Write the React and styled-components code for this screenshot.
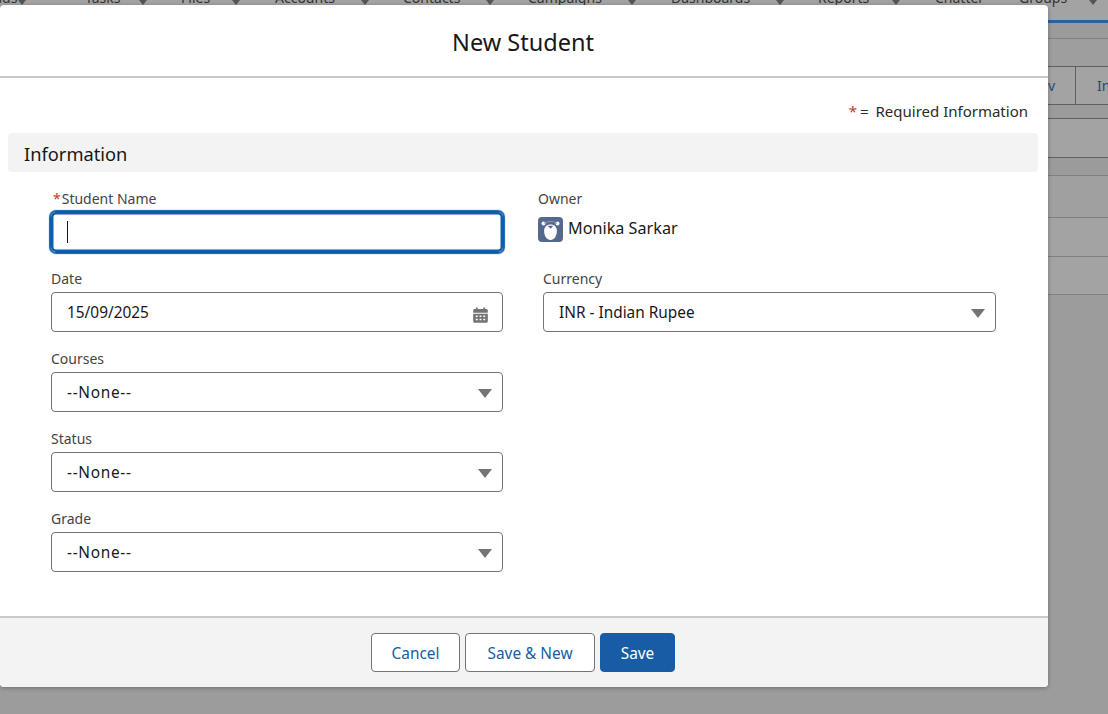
import React from "react";
import styled, { createGlobalStyle } from "styled-components";

const Global = createGlobalStyle`
  html, body { margin: 0; padding: 0; width: 1108px; height: 714px; overflow: hidden; background: #9c9c9c; }
  * { box-sizing: border-box; }
  body { font-family: "Noto Sans", "Open Sans", sans-serif; color: #181818; }
`;

const Page = styled.div`
  position: relative;
  width: 1108px;
  height: 714px;
  overflow: hidden;
`;

const Backdrop = styled.div`
  display: flex;
  flex-direction: column;
  background: #9c9c9c;
`;

const Nav = styled.nav`
  display: flex;
  height: 20px;
  margin-left: -21px;
  overflow: hidden;
  background: #a3a3a3;
`;

const NavItem = styled.div`
  flex: none;
  width: ${(p) => p.$w}px;
  margin-top: -14px;
  height: 22px;
  display: flex;
  align-items: center;
  font-size: 14px;
  color: #333;
  white-space: nowrap;
`;

const NavLabel = styled.span`
  flex: none;
  width: ${(p) => p.$w}px;
`;

const NavCaret = styled.span`
  flex: none;
  width: 0;
  height: 0;
  margin-top: 10px;
  border-left: 4px solid transparent;
  border-right: 4px solid transparent;
  border-top: 5px solid #555;
`;

const BlueLine = styled.div`
  height: 3px;
  background: #2f5f9c;
`;

const BgRow = styled.div`
  display: flex;
  justify-content: flex-end;
  height: ${(p) => p.$h}px;
  background: ${(p) => p.$bg};
  border-bottom: 1px solid ${(p) => p.$line};
`;

const BgTab = styled.div`
  width: ${(p) => p.$w}px;
  border-right: ${(p) => (p.$divider ? "1px solid #5f5f5f" : "none")};
  padding-left: ${(p) => p.$pad}px;
  display: flex;
  align-items: center;
  font-size: 14px;
  color: #1f4a7c;
  white-space: nowrap;
  overflow: hidden;
`;

const BgTabText = styled.span`
  margin-left: auto;
  margin-right: 20px;
`;

const Modal = styled.section`
  position: absolute;
  left: 0;
  top: 5px;
  width: 1048px;
  height: 682px;
  display: flex;
  flex-direction: column;
  background: #fff;
  border-radius: 4px;
  box-shadow: 0 1px 4px rgba(0, 0, 0, 0.3);
  overflow: hidden;
`;

const Header = styled.header`
  flex: none;
  height: 73px;
  border-bottom: 2px solid #c9c9c9;
  display: flex;
  align-items: center;
  justify-content: center;
  padding: 2px 2px 0 0;
`;

const Title = styled.h2`
  margin: 0;
  font-size: 23.5px;
  font-weight: 400;
  color: #181818;
`;

const Body = styled.div`
  flex: 1;
  padding: 0 10px 0 8px;
`;

const RequiredNote = styled.div`
  height: 55px;
  padding: 22px 10px 0 0;
  text-align: right;
  font-size: 15px;
  line-height: 22px;
  color: #2b2b2b;
`;

const Star = styled.span`
  color: #c23934;
  margin: ${(p) => (p.$note ? "0 -1px 0 0" : "0 1px 0 2px")};
`;

const EqualsSign = styled.span`
  margin-right: 3px;
`;

const SectionBar = styled.div`
  height: 39px;
  padding: 2px 0 0 16px;
  display: flex;
  align-items: center;
  background: #f3f3f3;
  border-radius: 4px;
  font-size: 18.3px;
  color: #181818;
`;

const FormGrid = styled.div`
  display: flex;
  padding: 15px 0 0 43px;
`;

const Column = styled.div`
  flex: none;
  width: ${(p) => p.$w}px;
  margin-left: ${(p) => p.$ml || 0}px;
  display: flex;
  flex-direction: column;
`;

const Field = styled.div`
  height: 80px;
  padding-left: ${(p) => p.$pl || 0}px;
`;

const Label = styled.label`
  display: block;
  height: 25px;
  font-size: 14px;
  line-height: 24px;
  color: #444;
`;

const Control = styled.div`
  display: flex;
  align-items: center;
  justify-content: space-between;
  height: 40px;
  padding: 0 11px 0 15px;
  background: #fff;
  border: 1px solid #747474;
  border-radius: 4px;
  font-size: 15.4px;
  color: #181818;
`;

const FocusControl = styled(Control)`
  height: 42px;
  margin: -1px -1px 0 -1px;
  padding-left: 14px;
  border: 1px solid #0f5ca8;
  border-radius: 6px;
  box-shadow: 0 0 0 2.5px #0f5ca8 inset, 0 0 1px 1px #0f5ca8;
`;

const Cursor = styled.span`
  width: 1px;
  height: 22px;
  background: #181818;
  margin-left: 2px;
`;

const NoneText = styled.span`
  letter-spacing: 0.7px;
`;

const Caret = styled.span`
  width: 0;
  height: 0;
  margin: 3px -1px 0 0;
  border-left: 7px solid transparent;
  border-right: 7px solid transparent;
  border-top: 9px solid #747474;
`;

const CalendarSvg = styled.svg`
  flex: none;
  margin: 5px 3px 0 0;
`;

const OwnerRow = styled.div`
  display: flex;
  align-items: center;
  gap: 5px;
  height: 25px;
  margin-top: 5px;
  font-size: 16.2px;
  color: #181818;
`;

const OwnerName = styled.span`
  padding-bottom: 3px;
`;

const Footer = styled.footer`
  flex: none;
  height: 71px;
  border-top: 2px solid #c9c9c9;
  background: #f3f3f3;
  display: flex;
  justify-content: center;
  gap: 5px;
  padding: 15px 2px 0 0;
`;

const Button = styled.button`
  width: ${(p) => p.$w}px;
  height: 39px;
  padding: 2px 0 0;
  border-radius: 4px;
  border: 1px solid ${(p) => (p.$brand ? "#175ca4" : "#747474")};
  background: ${(p) => (p.$brand ? "#175ca4" : "#fff")};
  color: ${(p) => (p.$brand ? "#fff" : "#175ca4")};
  font-family: inherit;
  font-size: 15.4px;
`;

const CalendarIcon = () => (
  <CalendarSvg width="15" height="16" viewBox="0 0 16 17" aria-hidden="true">
    <path
      fill="#747474"
      d="M3 0.5h2v1.6h6V0.5h2v1.6h1.2c.9 0 1.6.7 1.6 1.6V6H.2V3.7c0-.9.7-1.6 1.6-1.6H3zM.2 7.2h15.6v8c0 .9-.7 1.6-1.6 1.6H1.8c-.9 0-1.6-.7-1.6-1.6z"
    />
    <path
      fill="#fff"
      d="M3 9h2v1.6H3zM7 9h2v1.6H7zM11 9h2v1.6h-2zM3 12.4h2V14H3zM7 12.4h2V14H7zM11 12.4h2V14h-2z"
    />
  </CalendarSvg>
);

const BearAvatar = () => (
  <svg width="25" height="25" viewBox="0 0 25 25" aria-hidden="true">
    <rect width="25" height="25" rx="4" fill="#54698d" />
    <circle cx="5.5" cy="6.5" r="2" fill="#fff" />
    <circle cx="19.5" cy="6.5" r="2" fill="#fff" />
    <path d="M6 6.5C9 3.8 16 3.8 19 6.5" fill="none" stroke="#8f9db5" strokeWidth="1" />
    <path
      fill="#fff"
      d="M12.5 7.4c3.9 0 6.4 2.4 6.4 6.6 0 5-2.8 9-6.4 9s-6.4-4-6.4-9c0-4.2 2.5-6.6 6.4-6.6z"
    />
    <path fill="#54698d" d="M10.5 8.8h4c.4 0 .5.4.3.6l-1.7 1.9c-.3.3-.6.3-.9 0l-2-1.9c-.2-.2-.1-.6.3-.6z" />
  </svg>
);

const navItems = [
  { label: "Leads", total: 106, text: 39 },
  { label: "Tasks", total: 96, text: 54 },
  { label: "Files", total: 94, text: 51 },
  { label: "Accounts", total: 128, text: 86 },
  { label: "Contacts", total: 125, text: 83 },
  { label: "Campaigns", total: 143, text: 100 },
  { label: "Dashboards", total: 147, text: 105 },
  { label: "Reports", total: 117, text: 74 },
  { label: "Chatter", total: 84, text: 84, noCaret: true },
  { label: "Groups", total: 90, text: 70 },
];

const selects = [
  { label: "Courses", value: "--None--" },
  { label: "Status", value: "--None--" },
  { label: "Grade", value: "--None--" },
];

export default function App() {
  return (
    <Page>
      <Global />
      <Backdrop>
        <Nav>
          {navItems.map((n) => (
            <NavItem key={n.label} $w={n.total}>
              <NavLabel $w={n.text}>{n.label}</NavLabel>
              {!n.noCaret && <NavCaret />}
            </NavItem>
          ))}
        </Nav>
        <BlueLine />
        <BgRow $h={16} $bg="#9b9b9b" $line="#808080" />
        <BgRow $h={28} $bg="#9e9e9e" $line="#5f5f5f" />
        <BgRow $h={38} $bg="#a3a3a3" $line="#5f5f5f">
          <BgTab $w={60} $pad={0} $divider>
            <BgTabText>v</BgTabText>
          </BgTab>
          <BgTab $w={32} $pad={21}>Info</BgTab>
        </BgRow>
        <BgRow $h={14} $bg="#9b9b9b" $line="#5f5f5f" />
        <BgRow $h={39} $bg="#a3a3a3" $line="#5f5f5f" />
        <BgRow $h={18} $bg="#9b9b9b" $line="#808080" />
        <BgRow $h={42} $bg="#a0a0a0" $line="#808080" />
        <BgRow $h={39} $bg="#a3a3a3" $line="#808080" />
        <BgRow $h={38} $bg="#a3a3a3" $line="#808080" />
      </Backdrop>

      <Modal>
        <Header>
          <Title>New Student</Title>
        </Header>
        <Body>
          <RequiredNote>
            <Star $note>*</Star> <EqualsSign>=</EqualsSign> Required Information
          </RequiredNote>
          <SectionBar>Information</SectionBar>
          <FormGrid>
            <Column $w={452}>
              <Field>
                <Label>
                  <Star>*</Star>Student Name
                </Label>
                <FocusControl>
                  <Cursor />
                </FocusControl>
              </Field>
              <Field>
                <Label>Date</Label>
                <Control>
                  15/09/2025
                  <CalendarIcon />
                </Control>
              </Field>
              {selects.map((s) => (
                <Field key={s.label}>
                  <Label>{s.label}</Label>
                  <Control>
                    <NoneText>{s.value}</NoneText>
                    <Caret />
                  </Control>
                </Field>
              ))}
            </Column>
            <Column $w={458} $ml={35}>
              <Field>
                <Label>Owner</Label>
                <OwnerRow>
                  <BearAvatar />
                  <OwnerName>Monika Sarkar</OwnerName>
                </OwnerRow>
              </Field>
              <Field $pl={5}>
                <Label>Currency</Label>
                <Control>
                  INR - Indian Rupee
                  <Caret />
                </Control>
              </Field>
            </Column>
          </FormGrid>
        </Body>
        <Footer>
          <Button $w={89}>Cancel</Button>
          <Button $w={130}>Save &amp; New</Button>
          <Button $w={75} $brand>Save</Button>
        </Footer>
      </Modal>
    </Page>
  );
}
